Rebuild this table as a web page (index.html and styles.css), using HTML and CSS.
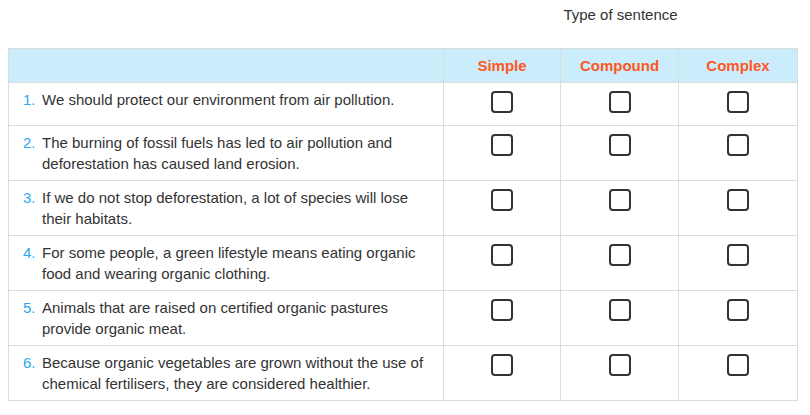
FILE: index.html
```html
<!DOCTYPE html>
<html>
<head>
<meta charset="utf-8">
<link rel="stylesheet" href="styles.css">
</head>
<body>
<div class="page">
  <table class="quiz">
    <colgroup>
      <col class="c-sent">
      <col class="c-opt1">
      <col class="c-opt2">
      <col class="c-opt3">
    </colgroup>
    <thead>
      <tr class="title-row">
        <th class="blank"></th>
        <th class="title" colspan="3">Type of sentence</th>
      </tr>
      <tr class="head-row">
        <th></th>
        <th class="opt-head">Simple</th>
        <th class="opt-head">Compound</th>
        <th class="opt-head">Complex</th>
      </tr>
    </thead>
    <tbody>
      <tr>
        <td><div class="sent"><span class="num">1.</span><span>We should protect our environment from air pollution.</span></div></td>
        <td class="box-cell"><span class="box"></span></td>
        <td class="box-cell"><span class="box"></span></td>
        <td class="box-cell"><span class="box"></span></td>
      </tr>
      <tr>
        <td><div class="sent"><span class="num">2.</span><span>The burning of fossil fuels has led to air pollution and deforestation has caused land erosion.</span></div></td>
        <td class="box-cell"><span class="box"></span></td>
        <td class="box-cell"><span class="box"></span></td>
        <td class="box-cell"><span class="box"></span></td>
      </tr>
      <tr>
        <td><div class="sent"><span class="num">3.</span><span>If we do not stop deforestation, a lot of species will lose their habitats.</span></div></td>
        <td class="box-cell"><span class="box"></span></td>
        <td class="box-cell"><span class="box"></span></td>
        <td class="box-cell"><span class="box"></span></td>
      </tr>
      <tr>
        <td><div class="sent"><span class="num">4.</span><span>For some people, a green lifestyle means eating organic food and wearing organic clothing.</span></div></td>
        <td class="box-cell"><span class="box"></span></td>
        <td class="box-cell"><span class="box"></span></td>
        <td class="box-cell"><span class="box"></span></td>
      </tr>
      <tr>
        <td><div class="sent"><span class="num">5.</span><span>Animals that are raised on certified organic pastures provide organic meat.</span></div></td>
        <td class="box-cell"><span class="box"></span></td>
        <td class="box-cell"><span class="box"></span></td>
        <td class="box-cell"><span class="box"></span></td>
      </tr>
      <tr>
        <td><div class="sent"><span class="num">6.</span><span>Because organic vegetables are grown without the use of chemical fertilisers, they are considered healthier.</span></div></td>
        <td class="box-cell"><span class="box"></span></td>
        <td class="box-cell"><span class="box"></span></td>
        <td class="box-cell"><span class="box"></span></td>
      </tr>
    </tbody>
  </table>
</div>
</body>
</html>
```

FILE: styles.css
```css
html, body {
  margin: 0;
  padding: 0;
  background: #fff;
}
body {
  font-family: "Liberation Sans", Arial, sans-serif;
  font-size: 15px;
  line-height: 21px;
  color: #333;
}
.page {
  padding: 4px 0 0 8px;
}
.quiz {
  border-collapse: collapse;
  width: 789px;
  table-layout: fixed;
}
.c-sent { width: 435px; }
.c-opt1 { width: 117px; }
.c-opt2 { width: 118px; }
.c-opt3 { width: 119px; }

.title-row th {
  border: none;
  padding: 0 0 23px 0;
  font-weight: normal;
  text-align: center;
  color: #333;
}
.head-row th {
  background: #cbecfa;
  border: 1px solid #dcdcdc;
  padding: 6px 8px;
}
.opt-head {
  color: #ff5722;
  font-weight: bold;
  text-align: center;
}
.quiz td {
  border: 1px solid #dcdcdc;
  padding: 6px 8px;
  vertical-align: top;
}
.sent {
  display: flex;
  padding-left: 6px;
}
.num {
  color: #29a9ef;
  flex: 0 0 19px;
}
.box-cell {
  text-align: center;
}
.box {
  display: block;
  width: 18px;
  height: 18px;
  margin: 2px auto 6px;
  border: 2px solid #333;
  border-radius: 4px;
  box-sizing: content-box;
}
```
